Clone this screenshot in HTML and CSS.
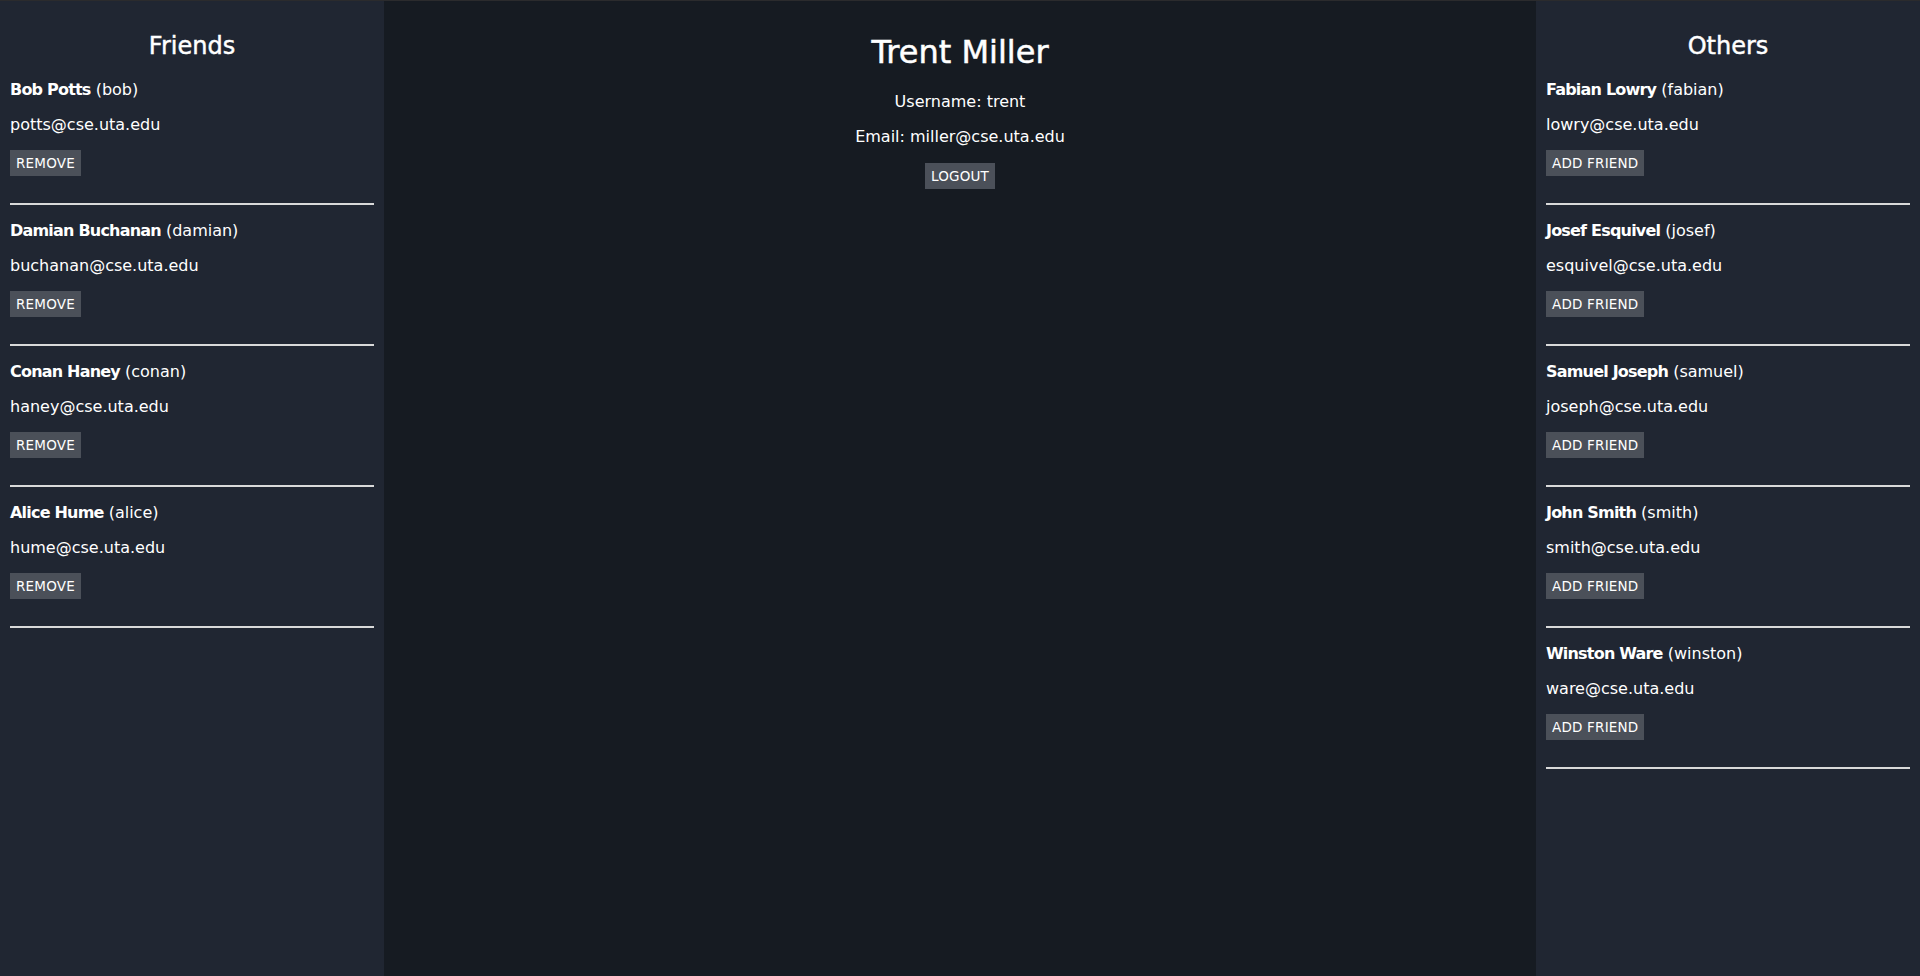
FILE: index.html
```html
<!DOCTYPE html>
<html>
<head>
<meta charset="utf-8">
<link rel="stylesheet" href="styles.css">
</head>
<body>
<div class="app">
  <aside class="side">
    <h2 class="side-title">Friends</h2>
    <div class="list">
      <div class="item">
        <p class="name"><b>Bob Potts</b> (bob)</p>
        <p class="email">potts@cse.uta.edu</p>
        <button class="btn">REMOVE</button>
        <hr class="sep">
      </div>
      <div class="item">
        <p class="name"><b>Damian Buchanan</b> (damian)</p>
        <p class="email">buchanan@cse.uta.edu</p>
        <button class="btn">REMOVE</button>
        <hr class="sep">
      </div>
      <div class="item">
        <p class="name"><b>Conan Haney</b> (conan)</p>
        <p class="email">haney@cse.uta.edu</p>
        <button class="btn">REMOVE</button>
        <hr class="sep">
      </div>
      <div class="item">
        <p class="name"><b>Alice Hume</b> (alice)</p>
        <p class="email">hume@cse.uta.edu</p>
        <button class="btn">REMOVE</button>
        <hr class="sep">
      </div>
    </div>
  </aside>
  <main class="main">
    <h1 class="main-title">Trent Miller</h1>
    <p class="info first">Username: trent</p>
    <p class="info">Email: miller@cse.uta.edu</p>
    <button class="btn logout">LOGOUT</button>
  </main>
  <aside class="side">
    <h2 class="side-title">Others</h2>
    <div class="list">
      <div class="item">
        <p class="name"><b>Fabian Lowry</b> (fabian)</p>
        <p class="email">lowry@cse.uta.edu</p>
        <button class="btn">ADD FRIEND</button>
        <hr class="sep">
      </div>
      <div class="item">
        <p class="name"><b>Josef Esquivel</b> (josef)</p>
        <p class="email">esquivel@cse.uta.edu</p>
        <button class="btn">ADD FRIEND</button>
        <hr class="sep">
      </div>
      <div class="item">
        <p class="name"><b>Samuel Joseph</b> (samuel)</p>
        <p class="email">joseph@cse.uta.edu</p>
        <button class="btn">ADD FRIEND</button>
        <hr class="sep">
      </div>
      <div class="item">
        <p class="name"><b>John Smith</b> (smith)</p>
        <p class="email">smith@cse.uta.edu</p>
        <button class="btn">ADD FRIEND</button>
        <hr class="sep">
      </div>
      <div class="item">
        <p class="name"><b>Winston Ware</b> (winston)</p>
        <p class="email">ware@cse.uta.edu</p>
        <button class="btn">ADD FRIEND</button>
        <hr class="sep">
      </div>
    </div>
  </aside>
</div>
</body>
</html>
```
FILE: styles.css
```css
html, body {
  margin: 0;
  padding: 0;
  height: 100%;
  background: #161b22;
}
body {
  font-family: "DejaVu Sans", "Liberation Sans", sans-serif;
  font-size: 16px;
  color: #ffffff;
  overflow: hidden;
}
.app {
  display: grid;
  grid-template-columns: 384px 1fr 384px;
  height: 975px;
  border-top: 1px solid #2b2b2d;
}
.side {
  background: #202632;
  padding: 31px 10px 0 10px;
}
.side-title {
  margin: 0;
  font-size: 24px;
  line-height: 28px;
  font-weight: normal;
  -webkit-text-stroke: 0.45px #ffffff;
  text-align: center;
}
.list {
  margin-top: 20px;
  display: flex;
  flex-direction: column;
}
.item {
  display: flex;
  flex-direction: column;
  align-items: flex-start;
  padding-bottom: 16px;
}
.name, .email {
  margin: 0 0 15px 0;
  line-height: 20px;
}
.name b {
  font-weight: bold;
  letter-spacing: -0.8px;
}
.btn {
  font-family: "DejaVu Sans", "Liberation Sans", sans-serif;
  font-size: 13.5px;
  color: #ffffff;
  background: #4b5059;
  border: none;
  border-radius: 0;
  height: 26px;
  padding: 0 6px;
  line-height: 26px;
  letter-spacing: 0.2px;
}
.sep {
  align-self: stretch;
  margin: 27px 0 0 0;
  border: none;
  height: 2px;
  background: #d9d9d9;
}
.main {
  padding-top: 33px;
  display: flex;
  flex-direction: column;
  align-items: center;
}
.main-title {
  margin: 0;
  font-size: 32px;
  line-height: 36px;
  font-weight: normal;
  -webkit-text-stroke: 0.5px #ffffff;
}
.info {
  margin: 15px 0 0 0;
  line-height: 20px;
}
.info.first {
  margin-top: 22px;
}
.logout {
  margin-top: 16px;
}
```
